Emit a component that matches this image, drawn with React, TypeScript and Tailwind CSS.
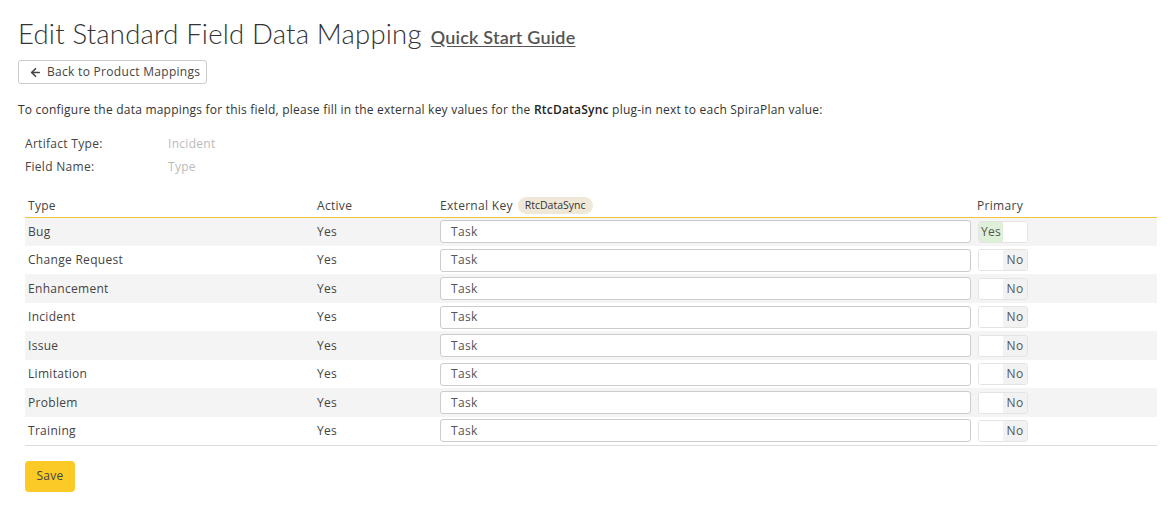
import { ArrowLeft } from 'lucide-react';

const rows = [
  { name: 'Bug', primary: true },
  { name: 'Change Request', primary: false },
  { name: 'Enhancement', primary: false },
  { name: 'Incident', primary: false },
  { name: 'Issue', primary: false },
  { name: 'Limitation', primary: false },
  { name: 'Problem', primary: false },
  { name: 'Training', primary: false },
];

function Toggle({ on }: { on: boolean }) {
  return (
    <div className="flex h-[22px] w-[50px] overflow-hidden rounded-[3px] border border-[#e4e4e4] bg-white text-[12px] text-[#555]">
      {on ? (
        <>
          <span className="flex w-1/2 items-center justify-center bg-[#dff0d8]">Yes</span>
          <span className="w-1/2 bg-white" />
        </>
      ) : (
        <>
          <span className="w-1/2 bg-white" />
          <span className="flex w-1/2 items-center justify-center bg-[#f2f2f2]">No</span>
        </>
      )}
    </div>
  );
}

export default function App() {
  return (
    <div className="min-h-[509px] bg-white px-[18px] pt-[13px] font-['Open_Sans',sans-serif] text-[12px] tracking-[0.3px] text-[#444]">
      <h1 className="flex items-baseline gap-[9px] tracking-normal">
        <span className="font-['Lato',sans-serif] text-[27.5px] font-light tracking-[0.2px] text-[#333]">
          Edit Standard Field Data Mapping
        </span>
        <a className="font-['Lato',sans-serif] text-[18px] font-semibold tracking-[0.2px] text-[#555] underline underline-offset-2">
          Quick Start Guide
        </a>
      </h1>

      <button className="mt-[6px] flex h-[24px] w-[189px] items-center gap-[5px] rounded-[3px] border border-[#ccc] bg-white pl-[10px] text-[12px] text-[#444]">
        <ArrowLeft className="h-[13px] w-[13px]" strokeWidth={3} />
        Back to Product Mappings
      </button>

      <p className="mt-[17px] text-[12px] tracking-[0.22px] text-[#333]">
        To configure the data mappings for this field, please fill in the external key values for the{' '}
        <span className="font-semibold text-[#222]">RtcDataSync</span> plug-in next to each SpiraPlan value:
      </p>

      <div className="mt-[13px] pl-[7px]">
        <div className="flex h-[23px] items-center">
          <span className="w-[143px] text-[#444]">Artifact Type:</span>
          <span className="text-[#bbb]">Incident</span>
        </div>
        <div className="flex h-[23px] items-center">
          <span className="w-[143px] text-[#444]">Field Name:</span>
          <span className="text-[#bbb]">Type</span>
        </div>
      </div>

      <table className="mt-[16px] ml-[7px] w-[1132px] border-collapse text-[#444]">
        <thead>
          <tr className="h-[23px] border-b border-[#f0c43c] text-left">
            <th className="w-[292px] pl-[3px] font-normal">Type</th>
            <th className="w-[123px] font-normal">Active</th>
            <th className="w-[537px] font-normal">
              <span className="flex items-center gap-[5px]">
                External Key
                <span className="rounded-full bg-[#efe8d8] px-[7px] py-[1px] text-[10.5px] tracking-normal text-[#333]">
                  RtcDataSync
                </span>
              </span>
            </th>
            <th className="font-normal">Primary</th>
          </tr>
        </thead>
        <tbody className="border-b border-[#ddd]">
          {rows.map((r, i) => (
            <tr key={r.name} className={`h-[28.5px] ${i % 2 === 0 ? 'bg-[#f4f4f4]' : 'bg-white'}`}>
              <td className="pl-[3px]">{r.name}</td>
              <td>Yes</td>
              <td>
                <div className="flex h-[23px] w-[531px] items-center rounded-[3px] border border-[#ccc] bg-white pl-[10px] text-[#555]">
                  Task
                </div>
              </td>
              <td className="pl-[1px]">
                <Toggle on={r.primary} />
              </td>
            </tr>
          ))}
        </tbody>
      </table>

      <button className="mt-[15px] ml-[7px] h-[31px] w-[50px] rounded-[4px] bg-[#fcca26] text-[12px] text-[#444]">
        Save
      </button>
    </div>
  );
}
